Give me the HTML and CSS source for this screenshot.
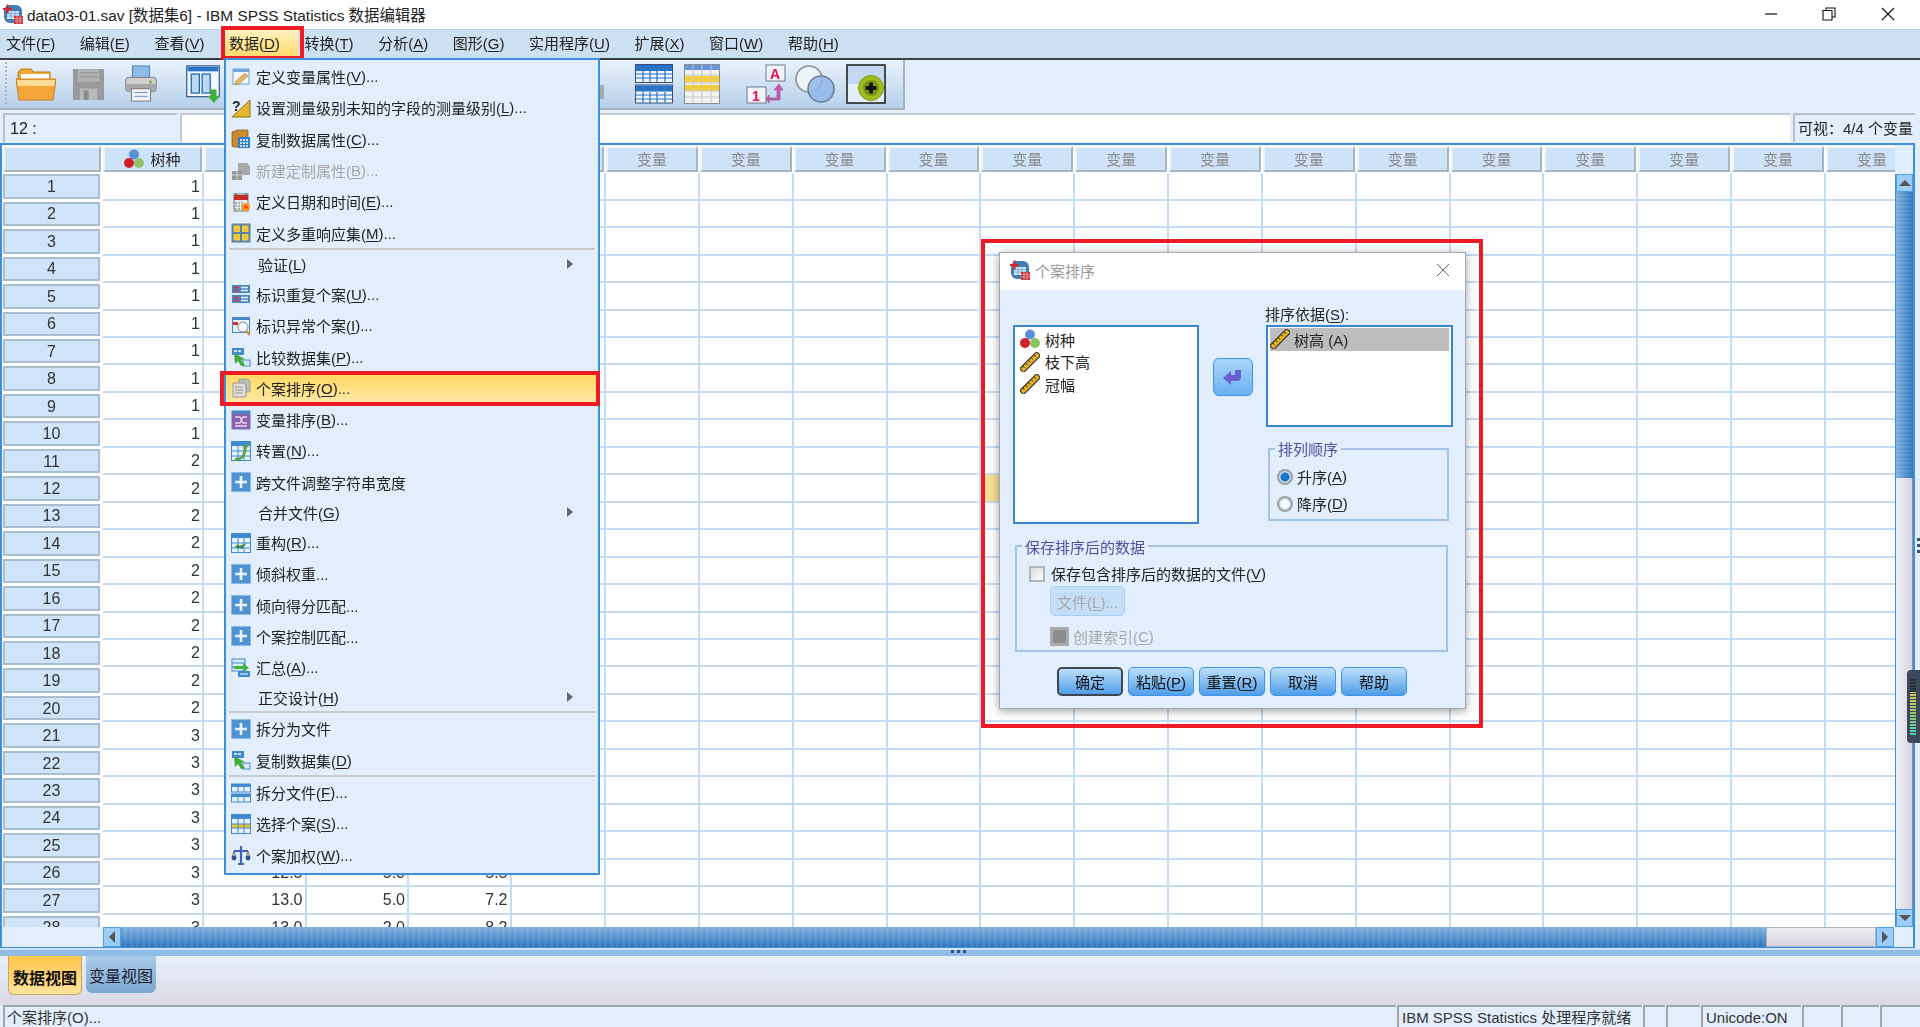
FILE: index.html
```html
<!DOCTYPE html>
<html lang="zh">
<head>
<meta charset="utf-8">
<title>IBM SPSS Statistics 数据编辑器</title>
<link rel="stylesheet" href="styles.css">
</head>
<body>
<svg class="defs" width="0" height="0" aria-hidden="true">
  <symbol id="i-app" viewBox="0 0 20 20"><rect x="1" y="1" width="18" height="18" rx="6" fill="#3f7fb5"/><rect x="4" y="7" width="12" height="8" fill="#d6e6f5"/><path d="M4 9.5h12M4 12h12M8 7v8M12 7v8" stroke="#6d9fca" stroke-width=".8"/><path d="M0 5h9M4.5 .5v9" stroke="#d8232a" stroke-width="2.2"/><rect x="11" y="12" width="9" height="8" fill="#c4333c"/><path d="M11 14.5h9M11 17h9M14 12v8M17 12v8" stroke="#f2b6b9" stroke-width=".7"/></symbol>
  <symbol id="i-balls" viewBox="0 0 20 20"><circle cx="10" cy="5.5" r="5" fill="#5b8fd9"/><circle cx="15" cy="14" r="5" fill="#8fc267"/><circle cx="5" cy="14" r="5" fill="#d0202a"/></symbol>
  <symbol id="i-ruler" viewBox="0 0 20 20"><g transform="rotate(-45 10 10)"><rect x="-2" y="7.5" width="24" height="5.4" fill="#e6b322" stroke="#333" stroke-width="1.2"/><path d="M2 8v2.4M6 8v2.4M10 8v2.4M14 8v2.4M18 8v2.4" stroke="#5a4300" stroke-width="1"/></g></symbol>
  <symbol id="m-plus" viewBox="0 0 20 20"><rect x=".5" y=".5" width="19" height="19" fill="#4f93d2" stroke="#8dbbe4"/><path d="M10 4v12M4 10h12" stroke="#e8f2fb" stroke-width="2.6"/></symbol>
  <symbol id="m-props" viewBox="0 0 20 20"><rect x="2" y="2" width="16" height="15" fill="#f4f8fc" stroke="#6a9bd0"/><rect x="2" y="2" width="16" height="3" fill="#74a6dc"/><path d="M4 18l1-4 9-8 3 3-9 8z" fill="#e5b766" stroke="#a98233" stroke-width=".6"/></symbol>
  <symbol id="m-measure" viewBox="0 0 20 20"><path d="M1 19 19 2v17z" fill="#e8b52e" stroke="#94700f"/><text x="1" y="13" class="svg-q">?</text></symbol>
  <symbol id="m-copy" viewBox="0 0 20 20"><path d="M1 3l6-2h10v17H3l-2-1z" fill="#c98a2e" stroke="#7b5215" stroke-width=".7"/><rect x="7" y="8" width="12" height="11" fill="#2f7fce"/><path d="M9 11h8M9 14h8M9 17h8" stroke="#fff" stroke-width="1.3" stroke-dasharray="2 1"/></symbol>
  <symbol id="m-new" viewBox="0 0 20 20"><path d="M7 2h9l3 3v9H7z" fill="#a8a8a8"/><rect x="1" y="10" width="10" height="9" fill="#999"/><path d="M1 14h10M6 10v9" stroke="#ccc"/></symbol>
  <symbol id="m-date" viewBox="0 0 20 20"><rect x="3" y="2" width="14" height="17" fill="#e9e9e9" stroke="#777"/><rect x="3" y="3" width="14" height="5" fill="#c82b2b"/><path d="M5 1v3M15 1v3" stroke="#555"/><path d="M4 11h8M4 14h8M4 17h8" stroke="#777" stroke-dasharray="2 1"/><circle cx="15" cy="15" r="4" fill="#f59a12"/><circle cx="15" cy="15" r="2" fill="#f5531c"/></symbol>
  <symbol id="m-multi" viewBox="0 0 20 20"><rect x=".5" y=".5" width="19" height="19" fill="#5d83a8"/><rect x="2.5" y="2.5" width="6.5" height="6.5" fill="#edc93e"/><rect x="11" y="2.5" width="6.5" height="6.5" fill="#edc93e"/><rect x="2.5" y="11" width="6.5" height="6.5" fill="#edc93e"/><rect x="11" y="11" width="6.5" height="6.5" fill="#edc93e"/></symbol>
  <symbol id="m-dup" viewBox="0 0 20 20"><rect x="1" y="1" width="18" height="8" fill="#4b86c4"/><rect x="1" y="11" width="18" height="8" fill="#4b86c4"/><path d="M3 3.5h5M3 6.5h5M3 13.5h5M3 16.5h5" stroke="#d8333a" stroke-width="1.6"/><path d="M10 3.5h7M10 6.5h7M10 13.5h7M10 16.5h7" stroke="#eaf2fa" stroke-width="1.6"/></symbol>
  <symbol id="m-anom" viewBox="0 0 20 20"><rect x="1" y="1" width="18" height="16" fill="#4b86c4"/><rect x="2" y="4" width="16" height="12" fill="#e8f0f8"/><rect x="2" y="6" width="5" height="3" fill="#d8333a"/><circle cx="12" cy="11" r="5" fill="#f2f6fa" stroke="#8a8a8a"/><path d="M15 15l4 4" stroke="#c8962e" stroke-width="2.4"/></symbol>
  <symbol id="m-compare" viewBox="0 0 20 20"><rect x="1" y="1" width="12" height="7" fill="#3f8bd0"/><path d="M3 4h8" stroke="#fff" stroke-dasharray="3 1" stroke-width="1.4"/><rect x="12" y="13" width="7" height="6" fill="#dbe9f7" stroke="#3f8bd0"/><path d="M3 6l11 6-4 1 4 5-4 1-3-5-3 3z" fill="#43a93a"/></symbol>
  <symbol id="m-sort" viewBox="0 0 20 20"><path d="M8 1h9l2 2v11H8z" fill="#bdbdbd" stroke="#888" stroke-width=".6"/><path d="M2 5h11l2 2v12H2z" fill="#e0ded8" stroke="#888" stroke-width=".8"/><path d="M4 9h8M4 12h8M4 15h8" stroke="#999"/></symbol>
  <symbol id="m-sortvar" viewBox="0 0 20 20"><rect x=".5" y=".5" width="19" height="19" fill="#4b86c4"/><rect x="1" y="4" width="18" height="15" fill="#8d5fae"/><path d="M4 7h5l3 6h4M4 13h5l3-6h4M4 16h12" stroke="#e6d9ef" stroke-width="1.3" fill="none"/></symbol>
  <symbol id="m-trans" viewBox="0 0 20 20"><rect x=".5" y=".5" width="19" height="19" fill="#e8f1fa" stroke="#3f8bd0"/><rect x="1" y="1" width="18" height="4" fill="#3f8bd0"/><path d="M1 10h18M1 15h18M7 5v14M13 5v14" stroke="#3f8bd0"/><path d="M4 17c7 0 8-3 9-11l-2 1 4-5 3 5-2-1c-1 9-3 13-12 14z" fill="#5fa34a"/></symbol>
  <symbol id="m-restruct" viewBox="0 0 20 20"><rect x=".5" y=".5" width="19" height="19" fill="#e8f1fa" stroke="#3f8bd0"/><rect x="1" y="1" width="18" height="4" fill="#3f8bd0"/><path d="M1 10h18M1 15h18M7 5v14M13 5v14" stroke="#3f8bd0"/><path d="M3 14l5-3v2l8-3-4 4v2z" fill="#3f8a3a"/></symbol>
  <symbol id="m-agg" viewBox="0 0 20 20"><rect x="1" y="1" width="13" height="12" fill="#dcebf9" stroke="#3f8bd0"/><path d="M1 5h13M1 9h13" stroke="#3f8bd0"/><rect x="7" y="13" width="12" height="6" fill="#3f8bd0"/><path d="M9 16h8" stroke="#fff"/><path d="M3 8h9V5l6 5-6 4v-3H3z" fill="#47b13f"/></symbol>
  <symbol id="m-split" viewBox="0 0 20 20"><rect x=".5" y="1" width="19" height="8" fill="#e8f1fa" stroke="#3f8bd0"/><rect x=".5" y="11" width="19" height="8" fill="#e8f1fa" stroke="#3f8bd0"/><rect x="1" y="1" width="18" height="3" fill="#3f8bd0"/><rect x="1" y="11" width="18" height="3" fill="#3f8bd0"/><path d="M7 4v5M13 4v5M7 14v5M13 14v5" stroke="#3f8bd0"/></symbol>
  <symbol id="m-select" viewBox="0 0 20 20"><rect x=".5" y=".5" width="19" height="19" fill="#e8f1fa" stroke="#3f8bd0"/><rect x="1" y="1" width="18" height="4" fill="#3f8bd0"/><rect x="1" y="10" width="18" height="4" fill="#f0c428"/><path d="M1 10h18M1 14h18M7 5v14M13 5v14" stroke="#3f8bd0"/></symbol>
  <symbol id="m-weight" viewBox="0 0 20 20"><path d="M10 1v18M7 19h6M3 6h14" stroke="#3f63b8" stroke-width="2.2" fill="none"/><path d="M3 6l-2 7h4zM17 6l-2 7h4z" fill="none" stroke="#555" stroke-width=".8"/><circle cx="3" cy="13" r="2.4" fill="#34508f"/><circle cx="17" cy="13" r="2.4" fill="#34508f"/></symbol>
</svg>

<div class="app">
  <header class="titlebar">
    <svg class="app-icon"><use href="#i-app"/></svg>
    <span class="title-text">data03-01.sav [数据集6] - IBM SPSS Statistics 数据编辑器</span>
    <div class="win-btns">
      <span class="win-btn"><svg width="14" height="14" viewBox="0 0 14 14"><path d="M1 7h12" stroke="#111" stroke-width="1.2"/></svg></span>
      <span class="win-btn"><svg width="14" height="14" viewBox="0 0 14 14"><path d="M4 3V1h9v9h-3M1 3.5h9v9.5H1z" fill="none" stroke="#111" stroke-width="1.1"/></svg></span>
      <span class="win-btn"><svg width="14" height="14" viewBox="0 0 14 14"><path d="M1 1l12 12M13 1L1 13" stroke="#111" stroke-width="1.1"/></svg></span>
    </div>
  </header>

  <nav class="menubar">
    <span class="mb">文件(<u>F</u>)</span>
    <span class="mb">编辑(<u>E</u>)</span>
    <span class="mb">查看(<u>V</u>)</span>
    <span class="mb active">数据(<u>D</u>)</span>
    <span class="mb">转换(<u>T</u>)</span>
    <span class="mb">分析(<u>A</u>)</span>
    <span class="mb">图形(<u>G</u>)</span>
    <span class="mb">实用程序(<u>U</u>)</span>
    <span class="mb">扩展(<u>X</u>)</span>
    <span class="mb">窗口(<u>W</u>)</span>
    <span class="mb">帮助(<u>H</u>)</span>
  </nav>

  <div class="toolbar">
    <svg class="tb tb-folder" viewBox="0 0 40 34"><path d="M2 5l3-3h10l3 3h16v10H2z" fill="#e9a93a" stroke="#b97a1c"/><path d="M5 7h28v8H5z" fill="#fff"/><path d="M0 12h40l-3 21H3z" fill="#f6a73c" stroke="#cc7a17"/><path d="M1 13h38l-1 6H2z" fill="#fcdc96"/></svg>
    <svg class="tb tb-save" viewBox="0 0 34 34"><rect x="1" y="1" width="32" height="32" rx="1" fill="#9a9a9a"/><rect x="6" y="1" width="22" height="13" fill="#b2b2b2"/><path d="M8 5h18M8 9h18" stroke="#8c8c8c"/><rect x="8" y="21" width="18" height="12" fill="#b8b8b8"/><rect x="12" y="23" width="5" height="10" fill="#8c8c8c"/></svg>
    <svg class="tb tb-print" viewBox="0 0 34 40"><rect x="8" y="1" width="18" height="13" fill="#8fbbe8" stroke="#3d7fc0"/><rect x="1" y="13" width="32" height="15" rx="3" fill="#cfcfcf" stroke="#777"/><rect x="1" y="20" width="32" height="8" fill="#a8a8a8"/><circle cx="27" cy="18" r="1.6" fill="#67b53f"/><rect x="7" y="25" width="20" height="13" fill="#f3f3f3" stroke="#777"/><path d="M10 29h14M10 33h14" stroke="#5b8fc7"/></svg>
    <svg class="tb tb-goto" viewBox="0 0 38 42"><rect x="1" y="1" width="36" height="34" fill="#f3f7fb" stroke="#3b5f92" stroke-width="1.4"/><rect x="2" y="2" width="34" height="5" fill="#2b73c7"/><rect x="6" y="10" width="9" height="21" fill="#bcd8f2" stroke="#1f66b5" stroke-width="1.4"/><rect x="18" y="10" width="9" height="21" fill="#bcd8f2" stroke="#1f66b5" stroke-width="1.4"/><path d="M27 27h7v7h4l-7 8-7-8h3z" fill="#3fae3a"/></svg>
    <svg class="tb tb-hidden" viewBox="0 0 25 34"><path d="M0 2h8l7 6 3 26H0z" fill="#8e8e8e"/><path d="M16 18h6v14h-6z" fill="#aaa"/></svg>
    <svg class="tb tb-two" viewBox="0 0 38 40"><rect x=".5" y=".5" width="37" height="18" fill="#f0f6fb" stroke="#3b4f72"/><rect x="1" y="1" width="36" height="6" fill="#2b73c7"/><rect x=".5" y="21" width="37" height="18" fill="#f0f6fb" stroke="#3b4f72"/><rect x="1" y="21.5" width="36" height="6" fill="#2b73c7"/><path d="M1 10h36M1 14h36M1 31h36M1 35h36M8 7v11M15 7v11M22 7v11M30 7v11M8 28v11M15 28v11M22 28v11M30 28v11" stroke="#2b73c7" stroke-width="1.2"/></svg>
    <svg class="tb tb-yellow" viewBox="0 0 36 40"><rect x=".5" y=".5" width="35" height="39" fill="#f2f2f2" stroke="#8a8f98"/><rect x="1" y="1" width="34" height="5" fill="#6a96dc"/><rect x="1" y="12" width="34" height="6" fill="#f4cf38"/><rect x="1" y="21" width="34" height="6" fill="#f4cf38"/><path d="M1 11h34M1 19h34M1 27h34M1 33h34M9 1v38M18 1v38M27 1v38" stroke="#c6c6c6"/></svg>
    <svg class="tb tb-az" viewBox="0 0 40 40"><rect x="20" y="1" width="19" height="16" fill="#f4f4f8" stroke="#6a7a92"/><text x="24" y="15" class="svg-a">A</text><rect x="1" y="23" width="19" height="16" fill="#f4f4f8" stroke="#6a7a92"/><text x="6" y="37" class="svg-a">1</text><path d="M33 20l-5 6h3v8h-8v-3l-3 4 3 4v-3h11V26h3z" fill="#c55bb0" stroke="#93418a" stroke-width=".6"/></svg>
    <svg class="tb tb-venn" viewBox="0 0 40 38"><circle cx="14" cy="14" r="13" fill="#eef3fa" stroke="#8a8f98" stroke-width="1.6"/><circle cx="26" cy="24" r="13" fill="#91b7ea" fill-opacity=".85" stroke="#6f7f93" stroke-width="1.6"/></svg>
    <svg class="tb tb-add" viewBox="0 0 40 40"><rect x="1" y="1" width="38" height="38" fill="#e4eefa" stroke="#222" stroke-width="1.6"/><rect x="2" y="2" width="36" height="18" fill="#c3d9f2"/><circle cx="25" cy="24" r="12.5" fill="#9ebb1f" stroke="#7f9b10"/><circle cx="25" cy="24" r="8" fill="#7c9a12"/><path d="M25 18.5v11M19.5 24h11" stroke="#111" stroke-width="3.8"/></svg>
  </div>

  <div class="cellbar">
    <span class="namebox">12 :</span>
    <span class="editbox"></span>
    <span class="visbox">可视：<em>4/4</em> 个变量</span>
  </div>

  <main class="sheet">
    <div class="cells" id="cells"></div>
    <div class="vscroll">
      <span class="vs-gap"></span>
      <span class="sb-btn"><i class="tri tri-up"></i></span>
      <span class="vs-track"></span>
      <span class="vs-thumb"></span>
      <span class="sb-btn"><i class="tri tri-down"></i></span>
    </div>
    <div class="sheet-corner"></div>
    <div class="hscroll">
      <span class="sb-btn"><i class="tri tri-left"></i></span>
      <span class="hs-track"></span>
      <span class="hs-thumb"></span>
      <span class="sb-btn"><i class="tri tri-right"></i></span>
    </div>
  </main>

  <div class="splitter"><span class="grip"></span></div>

  <div class="tabs">
    <span class="tab tab-on">数据视图</span>
    <span class="tab">变量视图</span>
  </div>

  <footer class="status">
    <span class="st st-main">个案排序(O)...</span>
    <span class="st st-proc">IBM SPSS Statistics 处理程序就绪</span>
    <span class="st st-a"></span>
    <span class="st st-b"></span>
    <span class="st st-uni">Unicode:ON</span>
    <span class="st st-c"></span>
    <span class="st st-c"></span>
    <span class="st st-d"></span>
  </footer>
</div>

<div class="menu">
  <div class="mi"><svg><use href="#m-props"/></svg>定义变量属性(<u>V</u>)...</div>
  <div class="mi"><svg><use href="#m-measure"/></svg>设置测量级别未知的字段的测量级别(<u>L</u>)...</div>
  <div class="mi"><svg><use href="#m-copy"/></svg>复制数据属性(<u>C</u>)...</div>
  <div class="mi off"><svg><use href="#m-new"/></svg>新建定制属性(<u>B</u>)...</div>
  <div class="mi"><svg><use href="#m-date"/></svg>定义日期和时间(<u>E</u>)...</div>
  <div class="mi"><svg><use href="#m-multi"/></svg>定义多重响应集(<u>M</u>)...</div>
  <hr class="sep">
  <div class="mi sub">验证(<u>L</u>)</div>
  <div class="mi"><svg><use href="#m-dup"/></svg>标识重复个案(<u>U</u>)...</div>
  <div class="mi"><svg><use href="#m-anom"/></svg>标识异常个案(<u>I</u>)...</div>
  <div class="mi"><svg><use href="#m-compare"/></svg>比较数据集(<u>P</u>)...</div>
  <div class="mi hot"><svg><use href="#m-sort"/></svg>个案排序(<u>O</u>)...</div>
  <div class="mi"><svg><use href="#m-sortvar"/></svg>变量排序(<u>B</u>)...</div>
  <div class="mi"><svg><use href="#m-trans"/></svg>转置(<u>N</u>)...</div>
  <div class="mi"><svg><use href="#m-plus"/></svg>跨文件调整字符串宽度</div>
  <div class="mi sub">合并文件(<u>G</u>)</div>
  <div class="mi"><svg><use href="#m-restruct"/></svg>重构(<u>R</u>)...</div>
  <div class="mi"><svg><use href="#m-plus"/></svg>倾斜权重...</div>
  <div class="mi"><svg><use href="#m-plus"/></svg>倾向得分匹配...</div>
  <div class="mi"><svg><use href="#m-plus"/></svg>个案控制匹配...</div>
  <div class="mi"><svg><use href="#m-agg"/></svg>汇总(<u>A</u>)...</div>
  <div class="mi sub">正交设计(<u>H</u>)</div>
  <hr class="sep">
  <div class="mi"><svg><use href="#m-plus"/></svg>拆分为文件</div>
  <div class="mi"><svg><use href="#m-compare"/></svg>复制数据集(<u>D</u>)</div>
  <hr class="sep">
  <div class="mi"><svg><use href="#m-split"/></svg>拆分文件(<u>F</u>)...</div>
  <div class="mi"><svg><use href="#m-select"/></svg>选择个案(<u>S</u>)...</div>
  <div class="mi"><svg><use href="#m-weight"/></svg>个案加权(<u>W</u>)...</div>
</div>

<section class="dialog">
  <div class="dlg-title">
    <svg class="dlg-icon"><use href="#i-app"/></svg>
    <span class="dlg-name">个案排序</span>
    <svg class="dlg-close" width="14" height="14" viewBox="0 0 14 14"><path d="M1 1l12 12M13 1L1 13" stroke="#666" stroke-width="1"/></svg>
  </div>
  <div class="dlg-body">
    <div class="dlg-top">
      <ul class="list list-src">
        <li><svg><use href="#i-balls"/></svg>树种</li>
        <li><svg><use href="#i-ruler"/></svg>枝下高</li>
        <li><svg><use href="#i-ruler"/></svg>冠幅</li>
      </ul>
      <button class="arrow-btn"><svg width="20" height="16" viewBox="0 0 20 16"><path d="M0 9l8-7v4h4V1h6v8c0 2-2 3-4 3H8v4z" fill="#6a5fd0"/></svg></button>
      <div class="dlg-right">
        <div class="dlg-label">排序依据(<u>S</u>):</div>
        <ul class="list list-dst">
          <li class="picked"><svg><use href="#i-ruler"/></svg>树高 (A)</li>
        </ul>
        <div class="group group-order">
          <span class="legend">排列顺序</span>
          <label class="opt"><i class="radio on"></i>升序(<u>A</u>)</label>
          <label class="opt"><i class="radio"></i>降序(<u>D</u>)</label>
        </div>
      </div>
    </div>
    <div class="group group-save">
      <span class="legend">保存排序后的数据</span>
      <label class="opt opt-check"><i class="check"></i>保存包含排序后的数据的文件(<u>V</u>)</label>
      <button class="file-btn">文件(<u>L</u>)...</button>
      <label class="opt opt-index"><i class="check check-off"></i>创建索引(<u>C</u>)</label>
    </div>
    <div class="dlg-actions">
      <button class="btn btn-def">确定</button>
      <button class="btn">粘贴(<u>P</u>)</button>
      <button class="btn">重置(<u>R</u>)</button>
      <button class="btn">取消</button>
      <button class="btn">帮助</button>
    </div>
  </div>
</section>
<div class="redbox redbox-dialog"></div>
<div class="side-dots"></div>
<div class="meter"></div>
<script src="grid.js"></script>
</body>
</html>
```

FILE: styles.css
```css
* { box-sizing: border-box; }
html, body { margin: 0; height: 100%; overflow: hidden; }
body {
  position: relative;
  width: 1920px;
  height: 1027px;
  background: #e2eefb;
  color: #222;
  font-family: "Liberation Sans", "Noto Sans CJK SC", sans-serif;
  font-size: 15px;
}
.defs { position: absolute; }
.svg-q { font: bold 14px "Liberation Sans", sans-serif; fill: #222; }
.svg-a { font: bold 14px "Liberation Sans", sans-serif; fill: #e0104f; }
u { text-decoration-thickness: 1px; text-underline-offset: 2px; }

.app { display: flex; flex-direction: column; width: 1920px; height: 1027px; filter: blur(.35px); }

/* title */
.titlebar { display: flex; align-items: center; height: 29px; background: #fff; padding: 0 0 2px 3px; flex: none; }
.app-icon { width: 20px; height: 20px; margin-right: 4px; }
.title-text { font-size: 15.4px; color: #222; white-space: nowrap; }
.win-btns { display: flex; margin-left: auto; padding-right: 3px; }
.win-btn { display: flex; width: 58.5px; justify-content: center; }

/* menu bar */
.menubar { display: flex; align-items: center; height: 31px; flex: none; background: #cde0f2; border-top: 1px solid #b8cfe4; border-bottom: 2px solid #3a3f45; padding: 0 0 4px 6px; white-space: nowrap; }
.mb { position: relative; margin-right: 24.6px; z-index: 12; }
.mb.active::before { content: ""; position: absolute; z-index: -1; inset: -3px -18px -5px -6px; background: linear-gradient(#fff3c4, #ffd966); }
.mb.active::after { content: ""; position: absolute; top: -6px; bottom: -7px; left: -8px; right: -24px; border: 4px solid #ed1c24; }

/* toolbar */
.toolbar { position: relative; display: flex; align-items: center; flex: none; width: 905px; height: 50px; padding-left: 16px; background: linear-gradient(#eaf3fc, #b6d0ea); border-right: 2px solid #aab2ba; border-bottom: 2px solid #aab2ba; }
.toolbar::before { content: ""; position: absolute; left: 5px; top: 2px; bottom: 2px; width: 2px; background: repeating-linear-gradient(#b5b5b5 0 2px, transparent 2px 4px); }
.tb { flex: none; display: block; }
.tb-folder { width: 40px; height: 34px; }
.tb-save { width: 33px; height: 33px; margin-left: 16px; }
.tb-print { width: 34px; height: 38px; margin-left: 19px; }
.tb-goto { width: 38px; height: 38px; margin-left: 26px; }
.tb-hidden { width: 25px; height: 34px; margin-left: 360px; }
.tb-two { width: 38px; height: 40px; margin-left: 28px; }
.tb-yellow { width: 36px; height: 40px; margin-left: 11px; }
.tb-az { width: 40px; height: 40px; margin-left: 26px; }
.tb-venn { width: 40px; height: 38px; margin-left: 9px; }
.tb-add { width: 40px; height: 40px; margin-left: 11px; }

/* cell editor */
.cellbar { display: flex; flex: none; height: 30px; margin-top: 3px; padding: 0 5px 1px 3px; gap: 3px; }
.namebox { width: 174px; padding-left: 5px; font-size: 16px; line-height: 27px; border-top: 2px solid #b9bfc6; border-left: 2px solid #b9bfc6; }
.editbox { flex: 1; background: #fff; border-top: 2px solid #c5c8cc; border-left: 2px solid #c5c8cc; }
.visbox { width: 122px; padding-left: 3px; line-height: 27px; white-space: nowrap; border-top: 2px solid #b9bfc6; border-left: 2px solid #b9bfc6; }
.visbox em { font-style: normal; }

/* sheet */
.sheet { display: grid; flex: none; width: 1915px; height: 805px; grid-template-columns: 101px 1fr 18px; grid-template-rows: 1fr 20px; border: 2px solid #3d8fde; border-bottom-width: 1px; background: #e2eefb; }
.cells { grid-column: 1 / 3; display: grid; overflow: hidden; background: #fff;
  grid-template-columns: 101px 101px 102.5px 102.5px 102.5px 94.5px repeat(14, 93.85px);
  grid-template-rows: 28.3px repeat(28, 27.46px); }
.h { display: flex; align-items: center; justify-content: center; margin: 1px 2px 1px 0; padding-bottom: 1px; background: #cfe3f8; border: 2px solid; border-color: #eef5fc #aab4bf #aab4bf #eef5fc; color: #8a8a8a; white-space: nowrap; overflow: hidden; }
.h.var { color: #222; gap: 6px; }
.h.var svg { width: 20px; height: 20px; }
.h.corner { margin-left: 1px; }
.rh { display: flex; align-items: center; justify-content: center; margin: 1px 3px 2px 1px; padding-top: 1px; background: #d0e4f9; border: 2px solid #a9bdd1; font-size: 16px; color: #333; }
.c { display: flex; align-items: center; justify-content: flex-end; padding: 1px 2px 0 0; font-size: 16px; color: #333; background: #fff; border-right: 2px solid #c4dbf3; border-bottom: 2px solid #c4dbf3; }
.c.sel { background: #fbe08f; }

.vscroll { display: flex; flex-direction: column; border-left: 1px solid #3d8fde; }
.vs-gap { height: 29px; flex: none; background: #e2eefb; margin-left: -1px; }
.vscroll .sb-btn { height: 18px; }
.vs-track { height: 286px; flex: none; background: repeating-linear-gradient(#0000 0 2px, #ffffff14 2px 4px), linear-gradient(90deg, #7fb0de, #2e76ba); }
.vs-thumb { flex: 1; background: linear-gradient(90deg, #f1eff5, #d6d4df); border-right: 1px solid #8f8f95; }
.sb-btn { display: flex; flex: none; align-items: center; justify-content: center; background: #9ccdf7; border: 1px solid #4fa0ea; }
.tri { display: block; width: 0; height: 0; border: 6px solid transparent; }
.tri-up { border-bottom-color: #555; border-top-width: 0; }
.tri-down { border-top-color: #555; border-bottom-width: 0; }
.tri-left { border-right-color: #555; border-left-width: 0; }
.tri-right { border-left-color: #555; border-right-width: 0; }
.sheet-corner { background: #e2eefb; }
.hscroll { display: flex; grid-column: 2 / 4; margin-right: 19px; }
.hscroll .sb-btn { width: 18px; }
.hs-track { flex: 1; background: repeating-linear-gradient(90deg, #0000 0 3px, #ffffff12 3px 6px), linear-gradient(#7fb0de, #2e76ba); }
.hs-thumb { width: 110px; background: linear-gradient(#efedf3, #d6d4df); border: 1px solid #aeb4bd; }

/* splitter & tabs */
.splitter { position: relative; display: flex; justify-content: center; flex: none; height: 8px; background: linear-gradient(#cfe2f6 0 25%, #8fbce6 25%); }
.grip { width: 18px; height: 3px; margin-top: 2px; background: repeating-linear-gradient(90deg, #35547f 0 3px, transparent 3px 6px); }
.tabs { display: flex; flex: none; height: 45px; padding-left: 8px; gap: 4px; background: linear-gradient(#e6f0fb, #dcdbe7); }
.tab { display: flex; align-items: center; justify-content: center; width: 70px; height: 37px; font-size: 16px; color: #223; background: linear-gradient(#a8cbe9, #7da8d0); border-radius: 0 0 6px 6px; }
.tab-on { width: 74px; height: 39px; padding-top: 3px; font-weight: bold; color: #111; background: linear-gradient(#ffc648, #ffe29c); border: 1px solid #c8a860; border-top: 0; }

/* status */
.status { display: flex; flex: none; height: 26px; padding-top: 4px; background: linear-gradient(#dcdbe7 0 4px, #e2eefb 4px); white-space: nowrap; }
.st { display: block; height: 22px; line-height: 21px; padding-left: 3px; margin-right: 1px; border-top: 2px solid #a2a6ab; border-left: 2px solid #a2a6ab; color: #333; }
.st-main { flex: none; width: 1393px; margin-left: 3px; padding-left: 2px; }
.st-proc { width: 245px; }
.st-a { width: 22px; }
.st-b { width: 34px; }
.st-uni { width: 100px; }
.st-c { width: 38px; }
.st-d { flex: 1; margin-right: 0; }

/* data menu */
.menu { position: absolute; z-index: 10; left: 224px; top: 58px; width: 376px; height: 817px; padding-top: 1px; background: #e2eefb; border: 2px solid #3d8fde; border-radius: 1px; filter: blur(.35px); }
.mi { position: relative; display: flex; align-items: center; height: 31.3px; padding-left: 5px; white-space: nowrap; }
.mi svg { width: 20px; height: 20px; margin-right: 5px; flex: none; }
.mi.off { color: #a8a8a8; }
.mi.sub { height: 29px; padding-left: 32px; }
.mi.sub::after { content: ""; position: absolute; right: 25px; top: 9px; border: 5.5px solid transparent; border-left: 6px solid #666; border-right-width: 0; }
.mi.hot { background: linear-gradient(#ffd75c, #ffe9ab); }
.mi.hot::after { content: ""; position: absolute; top: -2px; bottom: -2px; left: -6px; right: -2px; border: 4px solid #ed1c24; }
.sep { height: 2px; margin: -1px 3px 0; border: 0; background: #cacaca; flex: none; }

/* dialog */
.dialog { position: absolute; z-index: 5; left: 999px; top: 252px; width: 467px; height: 457px; background: #e2eefb; border: 1px solid #a5a9ad; box-shadow: 0 2px 9px rgba(0,0,0,.38); filter: blur(.35px); }
.dlg-title { display: flex; align-items: center; height: 37px; padding: 0 15px 3px 10px; background: #fff; }
.dlg-icon { width: 20px; height: 20px; margin-right: 5px; }
.dlg-name { color: #999; }
.dlg-close { margin-left: auto; }
.dlg-body { padding-top: 16px; }
.dlg-top { display: grid; grid-template-columns: 186px 67px 187px; padding-left: 13px; }
.list { margin: 0; padding: 1px 0 0 5px; list-style: none; background: #fff; border: 2px solid #3a86d0; }
.list li { display: flex; align-items: center; height: 22.5px; white-space: nowrap; }
.list svg { width: 20px; height: 20px; margin-right: 5px; flex: none; }
.list-src { margin-top: 19px; height: 199px; }
.arrow-btn { display: flex; align-items: center; justify-content: center; width: 40px; height: 38px; margin: 52px 0 0 14px; padding: 0; background: linear-gradient(#a9d5fb, #6cb1f0); border: 1px solid #3d94e8; border-radius: 6px; }
.dlg-label { height: 19px; line-height: 18px; margin-left: -1px; white-space: nowrap; }
.list-dst { height: 102px; padding: 1px 2px; }
.picked { padding-left: 0; background: #bdbdbd; }
.picked svg { margin-right: 4px; }
.group { position: relative; border: 2px solid #a2c3e6; }
.legend { position: absolute; left: 5px; top: -9px; height: 18px; line-height: 18px; padding: 0 3px; background: #e2eefb; color: #4a50a5; white-space: nowrap; }
.group-order { width: 181px; height: 73px; margin: 21px 0 0 2px; padding: 13px 0 0 7px; }
.opt { display: flex; align-items: center; height: 27px; white-space: nowrap; }
.radio { width: 16px; height: 16px; margin-right: 4px; border-radius: 50%; background: radial-gradient(#f4f8fc 0 4px, #cfd8e2 5px); border: 2px solid #9aa1a9; }
.radio.on { background: radial-gradient(#1a78c9 0 4px, #cfdcea 5px); }
.group-save { width: 433px; height: 107px; margin: 21px 0 0 15px; padding: 16px 0 0 12px; }
.group-save .legend { top: -8px; }
.opt-check { height: 21px; }
.check { width: 16px; height: 16px; margin-right: 6px; background: linear-gradient(135deg, #ddd, #fbfbfb); border: 2px solid #b2b6ba; }
.check-off { width: 19px; height: 19px; margin-right: 4px; background: #8d8d8d; border: 3px solid #ababab; }
.file-btn { display: block; width: 75px; height: 30px; margin: 2px 0 0 21px; padding: 0; font: inherit; color: #a9a9a9; background: #c4def8; border: 1px solid #a6cff5; border-radius: 5px; }
.opt-index { height: 22px; margin: 9px 0 0 21px; color: #a9a9a9; }
.dlg-actions { display: flex; gap: 5px; margin-top: 15px; padding-left: 57px; }
.btn { width: 66px; height: 29px; padding: 0; font: inherit; color: #111; background: linear-gradient(#bcdffb, #4f9ee8); border: 1px solid #3d94e8; border-radius: 5px; }
.btn-def { border: 2px solid #40464f; }

/* annotations & overlays */
.redbox { position: absolute; z-index: 11; border: 4px solid #ed1c24; pointer-events: none; }
.redbox-dialog { left: 981px; top: 239px; width: 502px; height: 489px; }
.side-dots { position: absolute; right: 0; top: 538px; width: 3px; height: 17px; background: repeating-linear-gradient(#35547f 0 3px, transparent 3px 6px); }
.meter { position: absolute; right: 0; top: 670px; width: 13px; height: 73px; border-radius: 4px 0 0 4px; background: repeating-linear-gradient(#3d4858 0 1px, transparent 1px 3px) 3px 8px / 6px 58px no-repeat, linear-gradient(#26303c 0 25%, #d8c860 25%, #9bc86a 60%, #44d0b8 100%) 3px 8px / 6px 58px no-repeat, #3d4858; }
```

FILE: grid.js
```js
(function () {
  var grid = document.getElementById('cells');
  var data = {
    26: ['12.5', '5.0', '5.5'],
    27: ['13.0', '5.0', '7.2'],
    28: ['13.0', '2.0', '8.2']
  };
  function add(cls, text) {
    var el = document.createElement('div');
    el.className = cls;
    if (text) el.textContent = text;
    grid.appendChild(el);
    return el;
  }
  add('h corner');
  var head = add('h var');
  head.innerHTML = '<svg><use href="#i-balls"/></svg>树种';
  /* The next four headers lie wholly under the open menu. */
  for (var e = 0; e < 4; e++) add('h');
  for (var v = 0; v < 14; v++) add('h', '变量');
  for (var r = 1; r <= 28; r++) {
    add('rh', String(r));
    add('c', String(Math.ceil(r / 10)));
    var vals = data[r] || ['', '', ''];
    vals.forEach(function (t) { add('c', t); });
    for (var i = 0; i < 15; i++) add(r === 12 && i === 5 ? 'c sel' : 'c');
  }
})();
```
